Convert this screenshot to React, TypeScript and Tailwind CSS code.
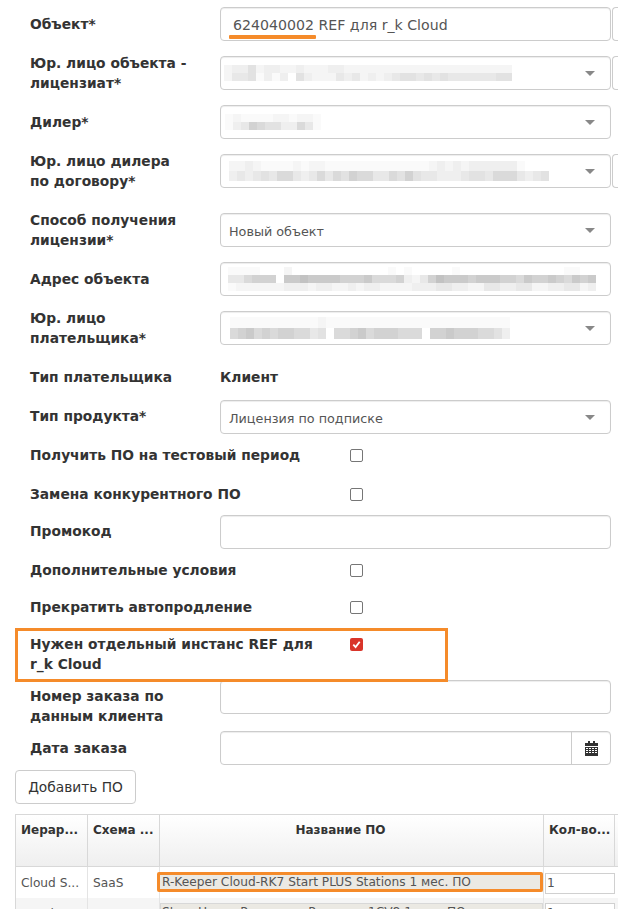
import React from "react";

const SHADES = ["#ffffff", "#fafafa", "#f5f5f5", "#efefef", "#e8e8e8", "#e2e2e2", "#dadada", "#d2d2d2", "#cacaca", "#c2c2c2"];

// censored values in the screenshot, one string per row of blocks
const Pixels = ({ rows, cellH = 8 }: { rows: string[]; cellH?: number }) => (
  <div className="flex flex-col">
    {rows.map((row, i) => (
      <div key={i} className="flex">
        {row.split("").map((c, j) => (
          <div key={j} className="w-2" style={{ height: cellH, backgroundColor: SHADES[Number(c)] }} />
        ))}
      </div>
    ))}
  </div>
);

const boxClass =
  "w-[391px] h-[34px] bg-white border border-[#cccccc] rounded-[4px] shadow-[inset_0_1px_1px_rgba(0,0,0,0.075)] flex items-center shrink-0";

const Select = ({ children, text }: { children?: React.ReactNode; text?: string }) => (
  <div className={`${boxClass} justify-between pl-[8px] pr-[15px]`}>
    {text ? <span className="text-[12.75px] text-[#555555] pt-[3px]">{text}</span> : <div>{children}</div>}
    <div className="w-0 h-0 border-l-[5px] border-r-[5px] border-t-[5px] border-l-transparent border-r-transparent border-t-[#888888]" />
  </div>
);

const Input = ({ children }: { children?: React.ReactNode }) => <div className={`${boxClass} pl-[7px] pr-[8px]`}>{children}</div>;

const Label = ({ children, className = "" }: { children: React.ReactNode; className?: string }) => (
  <div className={`w-[220px] pl-[30px] pr-2 font-bold text-[13.8px] leading-[20px] text-[#333333] shrink-0 ${className}`}>{children}</div>
);

const Stub = () => (
  <div className="w-[7px] h-[34px] ml-[1px] bg-white border border-[#cccccc] rounded-l-[4px] border-r-0 shrink-0" />
);

const CheckRow = ({ label, className }: { label: string; className: string }) => (
  <div className={`flex items-center h-5 ${className}`}>
    <div className="w-[350px] pl-[30px] font-bold text-[13.8px] leading-[20px] text-[#333333] shrink-0">{label}</div>
    <div className="w-[13px] h-[13px] bg-white border border-[#767676] rounded-[2px]" />
  </div>
);

const Th = ({ className, children }: { className: string; children: React.ReactNode }) => (
  <div className={`h-full border-r border-[#d8d8d8] px-[5px] pt-[7px] font-bold text-[12px] leading-[16px] text-[#333333] whitespace-nowrap overflow-hidden shrink-0 ${className}`}>
    {children}
  </div>
);

export default function App() {
  return (
    <div className="relative w-[618px] h-[909px] overflow-hidden bg-white font-['DejaVu_Sans',sans-serif]">
      <div className="pt-[7px]">
        <div className="flex h-[34px]">
          <Label className="pt-[7px]">Объект*</Label>
          <Input>
            <span className="pl-[5px] pt-[3px] text-[14.15px] text-[#555555]">624040002 REF для r_k Cloud</span>
          </Input>
          <Stub />
        </div>

        <div className="flex h-[34px] mt-[15px]">
          <Label className="-mt-[3px]">Юр. лицо объекта - лицензиат*</Label>
          <Select>
            <div className="-ml-[5px]">
              <Pixels rows={["233523322322233222222222222222222222", "244513130532224342323455454544444455"]} />
            </div>
          </Select>
          <Stub />
        </div>

        <div className="flex h-[34px] mt-[15px]">
          <Label className="pt-[7px]">Дилер*</Label>
          <Select>
            <div className="-ml-[4px]">
              <Pixels rows={["121111221221", "134765533641"]} />
            </div>
          </Select>
        </div>

        <div className="flex h-[34px] mt-[15px]">
          <Label className="-mt-[3px]">
            Юр. лицо дилера
            <br />
            по договору*
          </Label>
          <Select>
            <Pixels cellH={10} rows={["2232111121221111111111111232323333331", "3434546643464657664465754433345546664345"]} />
          </Select>
          <Stub />
        </div>

        <div className="flex h-[34px] mt-[25px]">
          <Label className="-mt-[3px]">Способ получения лицензии*</Label>
          <Select text="Новый объект" />
        </div>

        <div className="flex h-[34px] mt-[15px]">
          <Label className="pt-[7px]">Адрес объекта</Label>
          <Input>
            <Pixels rows={["1111000200000000000010100000100000000000001100", "4467770889888877786667324798887888776877876878", "1222222333233223233222233344332244334422334423"]} />
          </Input>
        </div>

        <div className="flex h-[34px] mt-[15px]">
          <Label className="-mt-[3px]">
            Юр. лицо
            <br />
            плательщика*
          </Label>
          <Select>
            <div className="ml-[1px]">
              <Pixels cellH={11} rows={["11111111111211111111111111111111111", "67867677664506678677766607787776653"]} />
            </div>
          </Select>
        </div>

        <div className="flex mt-[22px] h-5 items-center">
          <Label>Тип плательщика</Label>
          <div className="font-bold text-[13.8px] text-[#333333]">Клиент</div>
        </div>

        <div className="flex h-[34px] mt-[13px]">
          <Label className="pt-[6px]">Тип продукта*</Label>
          <Select text="Лицензия по подписке" />
        </div>

        <CheckRow label="Получить ПО на тестовый период" className="mt-[11px]" />
        <CheckRow label="Замена конкурентного ПО" className="mt-[19px]" />

        <div className="flex h-[34px] mt-[11px]">
          <Label className="pt-[6px]">Промокод</Label>
          <Input />
        </div>

        <CheckRow label="Дополнительные условия" className="mt-[11px]" />
        <CheckRow label="Прекратить автопродление" className="mt-[17px]" />

        <div className="flex mt-[17px] h-[40px]">
          <div className="w-[350px] pl-[30px] pr-[30px] font-bold text-[13.8px] leading-[20px] text-[#333333] shrink-0">
            Нужен отдельный инстанс REF для r_k Cloud
          </div>
          <div className="w-[13px] h-[13px] mt-[4px] bg-[#d9352a] rounded-[2px] flex items-center justify-center">
            <svg viewBox="0 0 12 12" className="w-[11px] h-[11px]">
              <path d="M2.5 6.2 L5 8.8 L9.5 3" fill="none" stroke="#ffffff" strokeWidth="2" />
            </svg>
          </div>
        </div>

        <div className="flex h-[34px] mt-[6px]">
          <Label className="pt-[6px]">Номер заказа по данным клиента</Label>
          <Input />
        </div>

        <div className="flex h-[34px] mt-[17px]">
          <Label className="pt-[7px]">Дата заказа</Label>
          <div className={`${boxClass} justify-end`}>
            <div className="w-[39px] h-full border-l border-[#cccccc] flex items-center justify-center">
              <svg viewBox="0 0 13 15" className="w-[13px] h-[15px]">
                <path d="M3 0h2v2h3V0h2v2h3v3H0V2h3z" fill="#333333" />
                <path d="M0 6h13v9H0z" fill="#333333" />
                <path d="M1 7h2v1H1zM4 7h2v1H4zM7 7h2v1H7zM10 7h2v1h-2zM1 9h2v1H1zM4 9h2v1H4zM7 9h2v1H7zM10 9h2v1h-2zM1 11h2v1H1zM4 11h2v1H4zM7 11h2v1H7zM10 11h2v1h-2z" fill="#ffffff" />
              </svg>
            </div>
          </div>
        </div>

        <button className="block ml-[15px] mt-[5px] h-[34px] w-[121px] bg-white border border-[#cccccc] rounded-[4px] text-[13.75px] text-[#333333]">
          Добавить ПО
        </button>

        <div className="ml-[15px] mt-[10px] border-t border-l border-[#d8d8d8]">
          <div className="flex h-[52px] border-b border-[#d8d8d8] bg-gradient-to-b from-white to-[#efefef]">
            <Th className="w-[72px]">Иерар...</Th>
            <Th className="w-[72px]">Схема ...</Th>
            <Th className="w-[384px] text-center pr-[27px]">Название ПО</Th>
            <Th className="w-[71px]">Кол-во...</Th>
          </div>
          <div className="flex h-[31px] text-[12.2px] text-[#555555]">
            <div className="w-[72px] pl-[5px] pt-[7px] border-r border-[#e4e4e4] shrink-0">Cloud S...</div>
            <div className="w-[72px] pl-[5px] pt-[7px] border-r border-[#e4e4e4] shrink-0">SaaS</div>
            <div className="w-[384px] shrink-0 border-r border-[#e4e4e4] pt-[6px]">
              <div className="h-[19px] bg-[#ebe9e3] pl-[2px] leading-[19px] whitespace-nowrap">
                R-Keeper Cloud-RK7 Start PLUS Stations 1 мес. ПО
              </div>
            </div>
            <div className="w-[71px] pt-[6px] pl-[1px]">
              <div className="h-[21px] bg-white border border-[#d0d0d0] pl-[1px] leading-[19px]">1</div>
            </div>
          </div>
          <div className="flex h-[31px] bg-[#f5f5f5] text-[12.2px] text-[#555555]">
            <div className="w-[72px] pl-[5px] pt-[7px] border-r border-[#e4e4e4] shrink-0">On-Sit...</div>
            <div className="w-[72px] pl-[5px] pt-[7px] border-r border-[#e4e4e4] shrink-0">Пер...</div>
            <div className="w-[384px] shrink-0 border-r border-[#e4e4e4] pt-[5px]">
              <div className="h-[19px] bg-[#ebe9e3] border border-[#d8d8d8] pl-[1px] leading-[17px] whitespace-nowrap">
                Store House Resource - Resource 1СV8 1 мес. ПО
              </div>
            </div>
            <div className="w-[71px] pt-[5px] pl-[1px]">
              <div className="h-[21px] bg-white border border-[#d0d0d0] pl-[1px] leading-[19px]">1</div>
            </div>
          </div>
        </div>
      </div>

      {/* annotations drawn over the form */}
      <div className="absolute left-[229px] top-[35px] w-[87px] h-[4px] bg-[#f58b2a] rounded-[1px]" />
      <div className="absolute left-[15px] top-[628px] w-[433px] h-[54px] border-[3px] border-[#f58b2a]" />
      <div className="absolute left-[157px] top-[872px] w-[386px] h-[20px] border-[3px] border-[#f58b2a] rounded-[2px]" />
    </div>
  );
}
